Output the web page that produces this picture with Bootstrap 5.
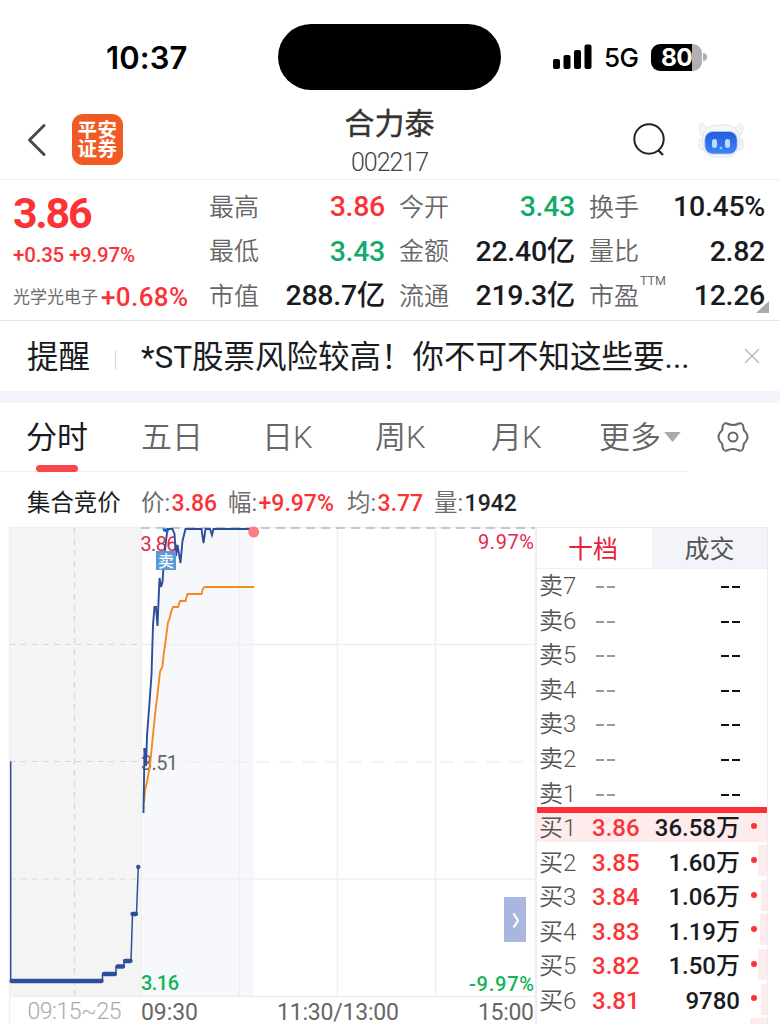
<!DOCTYPE html>
<html lang="zh-CN">
<head>
<meta charset="utf-8">
<meta name="viewport" content="width=device-width, initial-scale=1">
<title>合力泰 002217</title>
<link href="https://cdn.jsdelivr.net/npm/bootstrap@5.3.0/dist/css/bootstrap.min.css" rel="stylesheet">
<style>
  body { width: 780px; height: 1024px; overflow: hidden; background: #fff; color: #1a1b1e; font-family: Roboto, "Noto Sans CJK SC", sans-serif; font-weight: 400; }
  svg { display: block; flex: none; }
  .up { color: #fb3336; }
  .down { color: #12ac6a; }
  .dim { color: #6d6d6d; }

  .status { height: 90px; padding-top: 24px; font-family: Inter, sans-serif; color: #000; }
  .status-side { width: 278px; height: 66px; }
  .clock { font-size: 31px; font-weight: 600; letter-spacing: .1px; padding-left: 106px; padding-top: 2px; }
  .island { width: 223px; height: 66px; border-radius: 33px; background: #000; }
  .net { font-size: 26px; font-weight: 500; letter-spacing: -.6px; width: 35px; margin: 1px 12px 0; }
  .battery { width: 51px; height: 27px; border-radius: 9px; background: linear-gradient(90deg, #000 41px, #b0b0b0 41px); color: #fff; font-size: 24.5px; font-weight: 700; line-height: 27px; padding-left: 10px; letter-spacing: -.8px; }
  .battery-tip { width: 4px; height: 8px; border-radius: 0 4px 4px 0; background: #b0b0b0; margin-left: 1px; }

  .titlebar { height: 90px; border-bottom: 1px solid #f0f0f2; }
  .title-side { width: 278px; height: 99px; }
  .brand { width: 51px; height: 51px; border-radius: 11px; background: #f15a24; color: #fff; font-size: 19.5px; line-height: 19px; font-weight: 700; letter-spacing: .5px; }
  .stock-name { font-size: 30px; line-height: 36px; color: #333; -webkit-text-stroke: .4px #333; margin-top: 16px; }
  .stock-code { font-size: 25px; line-height: 32px; color: #444; font-weight: 350; letter-spacing: -1px; margin-top: 5px; }

  .quote { height: 141px; border-bottom: 1px solid #e4e4e8; padding: 5px 0 0 13px; }
  .quote-main { width: 196px; }
  .last { font-size: 43px; line-height: 56px; font-weight: 700; letter-spacing: -2.3px; }
  .change { font-size: 20.5px; line-height: 28px; font-weight: 500; letter-spacing: -.2px; }
  .sector { font-size: 17px; line-height: 32px; margin-top: 12px; margin-right: 3px; }
  .sector-pct { font-size: 26px; line-height: 32px; font-weight: 500; letter-spacing: .4px; margin-top: 12px; }
  .stats { width: 176px; margin-right: 14px; }
  .stats > div { height: 44.6px; }
  .stats .k { font-size: 25px; font-weight: 350; color: #666; }
  .stats .v { font-size: 28.5px; font-weight: 500; white-space: nowrap; letter-spacing: -.3px; }
  .ttm { font-size: 12.5px; top: 0; left: 51px; font-weight: 400; line-height: 14px; }
  .corner { right: 11px; bottom: 7px; }

  .notice { height: 70px; padding: 4px 0 0 27px; font-size: 31.5px; }
  .notice-sep { width: 1px; height: 20px; background: #d8d8dc; margin: 4px 25px 0 25px; }
  .notice-text { width: 560px; white-space: nowrap; }
  .band { height: 12px; background: #f2f4f9; }

  .periods { height: 69px; width: 688px; border-bottom: 1px solid #eee; font-size: 31px; font-weight: 350; color: #666; }
  .periods > div { height: 68px; line-height: 69px; }
  .periods .on { color: #1a1b1e; font-weight: 400; }
  .on-line { width: 42px; height: 7px; border-radius: 4px; background: #f8464a; left: 10px; bottom: -1px; }

  .auction { height: 48px; padding: 8px 0 0 27px; font-size: 23.4px; line-height: 46px; white-space: nowrap; }
  .auction b { font-size: 23px; font-weight: 500; margin-left: 1.5px; }

  .book { width: 232px; margin-top: 7px; border: 1px solid #ececf0; border-bottom: 0; height: 497px; overflow: hidden; }
  .book-tab { height: 41px; line-height: 44px; font-size: 25px; border-bottom: 1px solid #eee; }
  .book-tab.sel { color: #e8203f; padding-right: 3px; }
  .book-tab.other { background: #f2f4f9; color: #555; }
  .lvl { height: 34.55px; font-size: 24px; }
  .lvl .n { width: 55px; padding-left: 2px; font-weight: 350; color: #555; }
  .lvl .p { width: 51px; font-weight: 500; }
  .lvl .q { width: 97px; font-weight: 500; }
  .lvl .dot { width: 6px; height: 6px; border-radius: 50%; background: #fb3336; margin: 0 0 5px 11px; }
  .depth { right: 0; top: 0; height: 31px; background: #feeced; }
  .split { height: 6px; background: #fb3034; margin-bottom: -2px; margin-top: -4px; position: relative; z-index: 1; }
  .dash { width: 8px; height: 2px; margin-top: 2px; background: #99989f; }
  .dash + .dash { margin-left: 3px; }
  .dash.k { background: #111; }
</style>
</head>
<body>
<div class="status d-flex">
  <div class="status-side d-flex align-items-center"><span class="clock">10:37</span></div>
  <div class="island"></div>
  <div class="status-side d-flex align-items-center">
    <svg width="40" height="26" viewBox="0 0 40 26" style="margin-left:51px;margin-bottom:2px"><g fill="#000"><rect x="1" y="16" width="7" height="10" rx="2"/><rect x="11.500" y="12" width="7" height="14" rx="2"/><rect x="22" y="7" width="7" height="19" rx="2"/><rect x="32.500" y="1.500" width="7" height="24.500" rx="2"/></g></svg>
    <span class="net">5G</span>
    <span class="battery">80</span><span class="battery-tip"></span>
  </div>
</div>

<header class="titlebar d-flex">
  <div class="title-side d-flex align-items-center">
    <svg width="20" height="34" viewBox="0 0 20 34" style="margin-left:27px;margin-right:25px"><path d="M17 2.500 2.500 17 17 31.500" fill="none" stroke="#4a4a4a" stroke-width="3" stroke-linecap="round" stroke-linejoin="round"/></svg>
    <div class="brand d-flex flex-column justify-content-center text-center"><span>平安</span><span>证券</span></div>
  </div>
  <div class="text-center" style="width:223px"><div class="stock-name">合力泰</div><div class="stock-code">002217</div></div>
  <div class="title-side d-flex align-items-center">
    <svg width="34" height="36" viewBox="0 0 34 36" style="margin-left:132px"><circle cx="16" cy="17" r="14.700" fill="none" stroke="#222" stroke-width="2"/><path d="M25 28 30 33" stroke="#222" stroke-width="2.300"/></svg>
    <svg width="46" height="38" viewBox="0 0 46 38" style="margin-left:31px">
      <defs><linearGradient id="face" x1="0" y1="0" x2="0" y2="1"><stop offset="0" stop-color="#235bd8"/><stop offset="1" stop-color="#3e83f8"/></linearGradient></defs>
      <g fill="#f5f6f8" stroke="#e2e3e8" stroke-width="1"><rect x="1" y="18" width="8" height="11" rx="3"/><rect x="37" y="18" width="8" height="11" rx="3"/><path d="M3 13C0 8 1 3 4 2c2 3 3 5 7 5h24c4 0 5-2 7-5 3 1 4 6 1 11-1 2-2 3-3 3H6c-1 0-2-1-3-3z"/><rect x="4.500" y="4" width="37" height="32" rx="13"/></g>
      <rect x="6.800" y="10.500" width="32.400" height="22.500" rx="8" fill="url(#face)" stroke="#b5cbf5" stroke-width=".8"/>
      <rect x="14" y="18" width="5" height="9" rx="2.500" fill="#b8dcff"/><rect x="27" y="18" width="5" height="9" rx="2.500" fill="#b8dcff"/><circle cx="23" cy="27" r="1.300" fill="#9cc8ff"/>
    </svg>
  </div>
</header>

<section class="quote d-flex position-relative">
  <div class="quote-main up">
    <div class="last">3.86</div>
    <div class="change">+0.35 +9.97%</div>
    <div class="d-flex"><span class="sector dim">光学光电子</span><span class="sector-pct">+0.68%</span></div>
  </div>
  <div class="stats">
    <div class="d-flex align-items-center justify-content-between"><span class="k">最高</span><span class="v up">3.86</span></div>
    <div class="d-flex align-items-center justify-content-between"><span class="k">最低</span><span class="v down">3.43</span></div>
    <div class="d-flex align-items-center justify-content-between"><span class="k">市值</span><span class="v">288.7亿</span></div>
  </div>
  <div class="stats">
    <div class="d-flex align-items-center justify-content-between"><span class="k">今开</span><span class="v down">3.43</span></div>
    <div class="d-flex align-items-center justify-content-between"><span class="k">金额</span><span class="v">22.40亿</span></div>
    <div class="d-flex align-items-center justify-content-between"><span class="k">流通</span><span class="v">219.3亿</span></div>
  </div>
  <div class="stats">
    <div class="d-flex align-items-center justify-content-between"><span class="k">换手</span><span class="v">10.45%</span></div>
    <div class="d-flex align-items-center justify-content-between"><span class="k">量比</span><span class="v">2.82</span></div>
    <div class="d-flex align-items-center justify-content-between position-relative"><span class="k">市盈</span><span class="ttm dim position-absolute">TTM</span><span class="v">12.26</span></div>
  </div>
  <svg class="corner position-absolute" width="13" height="12" viewBox="0 0 13 12"><path d="M13 0v12H0z" fill="#aaa"/></svg>
</section>

<section class="notice d-flex align-items-center">
  <span>提醒</span><span class="notice-sep"></span><span class="notice-text">*ST股票风险较高！你不可不知这些要...</span>
  <svg width="16" height="16" viewBox="0 0 16 16" style="margin:0 0 5px 43px"><path d="m1 1 14 14M15 1 1 15" stroke="#bbb9c5" stroke-width="1.500"/></svg>
</section>
<div class="band"></div>

<div class="d-flex">
  <nav class="periods d-flex">
    <div class="on position-relative" style="margin-left:26px;width:115px">分时<span class="on-line position-absolute"></span></div>
    <div style="width:121px">五日</div>
    <div style="width:113px">日K</div>
    <div style="width:116px">周K</div>
    <div style="width:108px">月K</div>
    <div class="d-flex">更多<svg width="17" height="11" viewBox="0 0 18 12" style="margin:29px 0 0 3px"><path d="M0 0h18L9 11z" fill="#aaa"/></svg></div>
  </nav>
  <svg width="32" height="32" viewBox="-16 -16 32 32" style="margin:18px 0 0 29px"><g fill="none" stroke="#666" stroke-width="2" stroke-linejoin="round"><path d="M-9.500-12.500Q-8-14.500-6-13.500Q0-10.500 6-13.500Q8-14.500 9.500-12.500Q10.500-11 10.500-9Q10.500-6 13-4.500Q14.500-2 14.500 0T13 4.500Q10.500 6 10.500 9Q10.500 11 9.500 12.500Q8 14.500 6 13.500Q0 10.500-6 13.500Q-8 14.500-9.500 12.500Q-10.500 11-10.500 9Q-10.500 6-13 4.500Q-14.500 2-14.500 0T-13-4.500Q-10.500-6-10.500-9Q-10.500-11-9.500-12.500Z"/><circle r="4.500"/></g></svg>
</div>

<div class="auction d-flex">
  <span style="width:114px">集合竞价</span>
  <span class="dim" style="width:87px">价:<b class="up">3.86</b></span>
  <span class="dim" style="width:119px">幅:<b class="up">+9.97%</b></span>
  <span class="dim" style="width:87px">均:<b class="up">3.77</b></span>
  <span class="dim">量:<b class="text-dark">1942</b></span>
</div>

<main class="d-flex">
  <svg width="536" height="504" viewBox="0 520 536 504" font-family="Roboto, 'Noto Sans CJK SC', sans-serif" font-size="20">
    <rect x="9" y="527" width="132" height="470" fill="#f4f4f4"/>
    <path d="M143 813 148 730 155 607 167 529H254V997H143Z" fill="#f7f8fc"/>
    <g fill="none" stroke="#efeff2" stroke-width="1.500"><path d="M9.500 527V1024M9 527.500H535M141 644.500H535M141 879H535M9 996.500H535M141.500 527V996M239.500 527V996M337.500 527V996M435.500 527V996M535.500 527V1024"/><path d="M141 762H535" stroke-dasharray="14 9"/></g>
    <g fill="none" stroke="#d6d6d6" stroke-width="1.200" stroke-dasharray="5.500 5.500"><path d="M10 644.500H141M10 761.500H141M10 879H141M74.500 528V996"/></g>
    <path d="M141 528H535" stroke="#b4b8cc" stroke-width="1.500" stroke-dasharray="9 6"/>
    <text x="140.500" y="550.500" fill="#e2284a" textLength="37">3.86</text>
    <text x="141" y="769.500" fill="#666" textLength="37">3.51</text>
    <path d="M144 802 145 790 147 782 150 765 152 745 155 715 158 690 160 672 162.500 666 164 652 166 638 168 622 169.500 619 171 612 173 607H178L180 601H185.500L187.500 594H201.500Q203 587 205 587H254" fill="none" stroke="#f38b1c" stroke-width="1.900"/>
    <path d="M143.500 813 144.500 748 146 766 147 736 151.500 675 153 625 154.500 607H156L157.500 626 159.500 578 161 587 162.500 582 164 560 165.500 545 167.500 529H172.500L174.500 534 176 556 177.500 545 180.500 563 182.500 541 185.500 529H201.500L203.500 543 205.500 529H210L212 535 213.500 529H254" fill="none" stroke="#2c4e98" stroke-width="1.900"/>
    <path d="M143.500 748h3.500v17h-2z" fill="#2c4e98"/>
    <path d="M162.500 528.500h7a3.500 3.500 0 0 1-7 0z" fill="#0d62cc"/>
    <circle cx="253.700" cy="532" r="5.500" fill="#fa7f83"/>
    <rect x="156" y="551" width="20" height="19" fill="#5999d8"/><text x="158" y="566.500" font-size="16" font-weight="500" fill="#fff">卖</text>
    <g fill="none" stroke="#2c4e9b" stroke-linejoin="round" stroke-linecap="round"><path d="M10.700 762V981H102.500V974H116V967H124V961H131L132.500 914H136.500L138.300 867" stroke-width="1.500"/><path d="M11.500 981H101.500M104 974H115M117.500 966.500H123M125 961H130.500M132.500 914H136M138.200 867h.1" stroke-width="4.300"/></g>
    <text x="141" y="989.500" fill="#12b457" font-weight="500" textLength="38">3.16</text>
    <text x="478" y="548.500" fill="#e2284a" textLength="56">9.97%</text>
    <text x="469" y="991" fill="#12b457" font-weight="500" textLength="65">-9.97%</text>
    <g font-size="23" fill="#666" font-weight="450"><text x="27.500" y="1018.500" fill="#aaa" font-weight="350" textLength="94">09:15~25</text><text x="141" y="1019.500" textLength="57">09:30</text><text x="277" y="1019.500" textLength="122">11:30/13:00</text><text x="478" y="1019.500" textLength="56">15:00</text></g>
    <rect x="504" y="897" width="22" height="45" fill="#a9b7e0"/><path d="M513.500 913.500 518 920.500 513.500 927.500" fill="none" stroke="#fff" stroke-width="2.200"/>
  </svg>

  <aside class="book">
    <div class="d-flex text-center"><div class="book-tab sel w-50">十档</div><div class="book-tab other w-50">成交</div></div>
    <div id="asks"></div>
    <div class="split"></div>
    <div id="bids"></div>
  </aside>
</main>

<script src="https://cdn.jsdelivr.net/npm/bootstrap@5.3.0/dist/js/bootstrap.bundle.min.js"></script>
<script>
  const dash = c => `<span class="dash ${c}"></span><span class="dash ${c}"></span>`;
  document.getElementById('asks').innerHTML = [7, 6, 5, 4, 3, 2, 1].map(n =>
    `<div class="lvl d-flex align-items-center"><span class="n">卖${n}</span><span class="p d-flex ps-1">${dash('')}</span><span class="q d-flex justify-content-end">${dash('k')}</span></div>`).join('');
  const bids = [['3.86', '36.58万', 231], ['3.85', '1.60万', 9], ['3.84', '1.06万', 6], ['3.83', '1.19万', 7], ['3.82', '1.50万', 9], ['3.81', '9780', 6], ['', '', 17]];
  document.getElementById('bids').innerHTML = bids.map(([p, q, w], i) =>
    `<div class="lvl d-flex align-items-center position-relative"><span class="depth position-absolute" style="width:${w}px"></span>` +
    (p ? `<span class="n position-relative">买${i + 1}</span><span class="p up position-relative">${p}</span><span class="q text-end position-relative">${q}</span><span class="dot position-relative"></span>` : '') + `</div>`).join('');
</script>
</body>
</html>
